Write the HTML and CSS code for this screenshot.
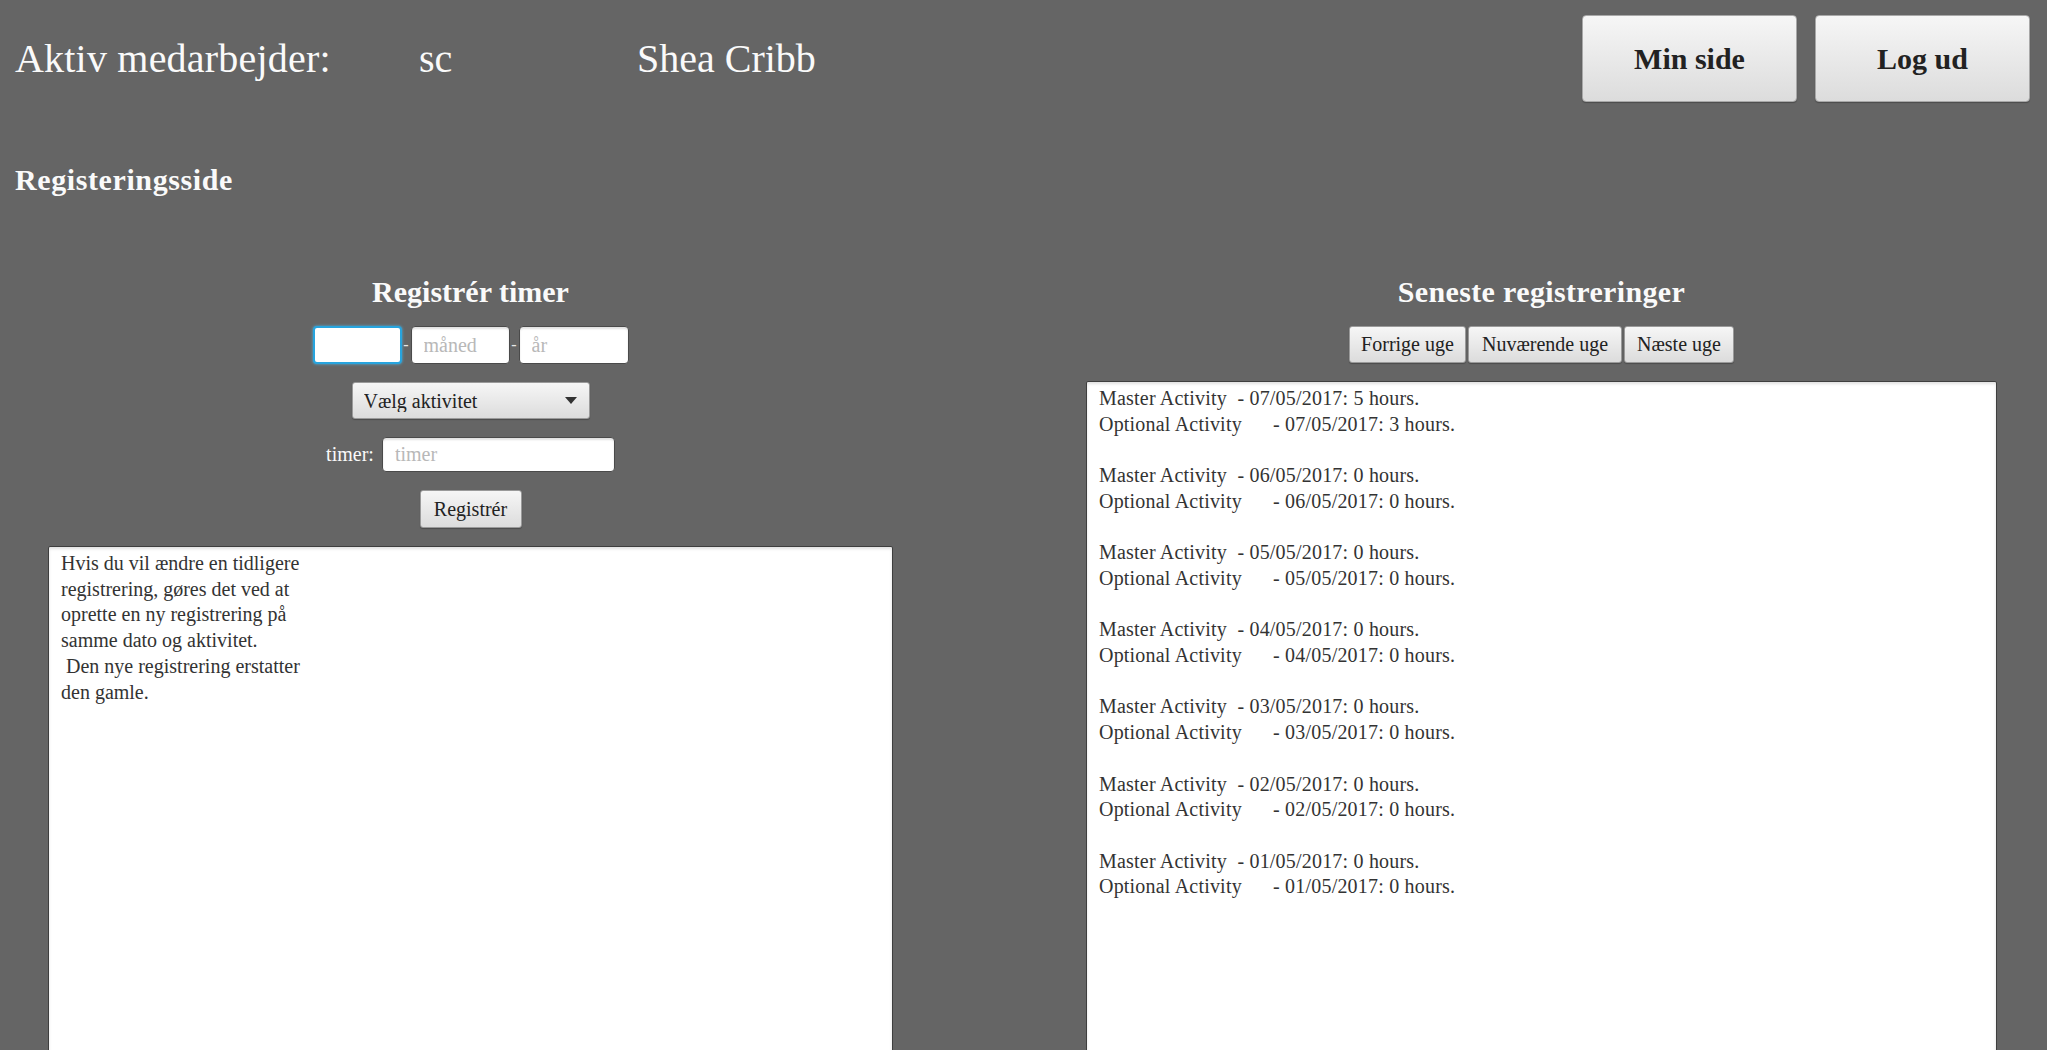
FILE: index.html
```html
<!DOCTYPE html>
<html lang="da">
<head>
<meta charset="utf-8">
<title>Registeringsside</title>
<link rel="stylesheet" href="styles.css">
</head>
<body>
<div class="page">
  <header class="topbar">
    <div class="user">
      <span class="user-label">Aktiv medarbejder:</span>
      <span class="user-initials">sc</span>
      <span class="user-name">Shea Cribb</span>
    </div>
    <div class="actions">
      <button class="big-btn">Min side</button>
      <button class="big-btn">Log ud</button>
    </div>
  </header>

  <h2 class="page-title">Registeringsside</h2>

  <main class="columns">
    <section class="col col-left">
      <h3 class="col-title">Registrér timer</h3>
      <div class="date-row">
        <input class="field field-day is-focus" type="text">
        <span class="dash">-</span>
        <input class="field field-month" type="text" placeholder="måned">
        <span class="dash">-</span>
        <input class="field field-year" type="text" placeholder="år">
      </div>
      <div class="select-wrap">
        <select class="select">
          <option>Vælg aktivitet</option>
        </select>
        <svg class="select-arrow" width="12" height="7" viewBox="0 0 12 7"><path d="M0 0h12L6 7z" fill="#333"/></svg>
      </div>
      <div class="timer-row">
        <label class="timer-label">timer:</label>
        <input class="field field-timer" type="text" placeholder="timer">
      </div>
      <button class="btn btn-register">Registrér</button>
      <div class="box box-info">Hvis du vil ændre en tidligere
registrering, gøres det ved at
oprette en ny registrering på
samme dato og aktivitet.
 Den nye registrering erstatter
den gamle.</div>
    </section>

    <section class="col col-right">
      <h3 class="col-title col-title-wide">Seneste registreringer</h3>
      <div class="week-row">
        <button class="btn btn-week btn-prev">Forrige uge</button>
        <button class="btn btn-week btn-cur">Nuværende uge</button>
        <button class="btn btn-week btn-next">Næste uge</button>
      </div>
      <div class="box box-list">Master Activity  - 07/05/2017: 5 hours.
Optional Activity      - 07/05/2017: 3 hours.

Master Activity  - 06/05/2017: 0 hours.
Optional Activity      - 06/05/2017: 0 hours.

Master Activity  - 05/05/2017: 0 hours.
Optional Activity      - 05/05/2017: 0 hours.

Master Activity  - 04/05/2017: 0 hours.
Optional Activity      - 04/05/2017: 0 hours.

Master Activity  - 03/05/2017: 0 hours.
Optional Activity      - 03/05/2017: 0 hours.

Master Activity  - 02/05/2017: 0 hours.
Optional Activity      - 02/05/2017: 0 hours.

Master Activity  - 01/05/2017: 0 hours.
Optional Activity      - 01/05/2017: 0 hours.</div>
    </section>
  </main>
</div>
</body>
</html>
```

FILE: styles.css
```css
html, body {
  margin: 0;
  padding: 0;
  background: #656565;
}

body {
  font-family: "Liberation Serif", "Times New Roman", serif;
  color: #ffffff;
}

.page {
  height: 1050px;
  overflow: hidden;
}

/* ---------- top bar ---------- */
.topbar {
  display: flex;
  justify-content: space-between;
  align-items: center;
  padding: 15px 17px 0 15px;
}

.user {
  display: flex;
  align-items: baseline;
  font-size: 40px;
  line-height: 46px;
  color: #fafafa;
}

.user-label {
  width: 404px;
  letter-spacing: 0.2px;
}

.user-initials {
  width: 218px;
}

.actions {
  display: flex;
  gap: 18px;
}

.big-btn {
  width: 215px;
  height: 87px;
  font-family: inherit;
  font-size: 30px;
  font-weight: bold;
  color: #222;
  background: linear-gradient(#f6f6f6, #dcdcdc);
  border: 1px solid #a8a8a8;
  border-radius: 4px;
  box-shadow: 0 1px 1px rgba(0, 0, 0, 0.25);
  padding: 0;
}

/* ---------- page title ---------- */
.page-title {
  margin: 60px 0 0 15px;
  font-size: 30px;
  line-height: 36px;
  font-weight: bold;
  letter-spacing: 0.6px;
  color: #fafafa;
}

/* ---------- columns ---------- */
.columns {
  display: grid;
  grid-template-columns: 941px 911px;
  column-gap: 145px;
  margin-top: 76px;
}

.col {
  display: flex;
  flex-direction: column;
  align-items: center;
  gap: 18px;
}

.col-title {
  margin: 0 0 -2px 0;
  font-size: 30px;
  line-height: 36px;
  font-weight: bold;
  color: #fafafa;
}

.col-title-wide {
  letter-spacing: 0.35px;
}

/* ---------- form fields ---------- */
.date-row {
  display: flex;
  align-items: center;
}

.dash {
  width: 9px;
  text-align: center;
  font-size: 16px;
  color: #e8e8e8;
}

.field {
  box-sizing: border-box;
  height: 38px;
  padding: 0 0 0 12px;
  font-family: inherit;
  font-size: 20px;
  color: #333;
  background: #ffffff;
  border: 1px solid #4a4a4a;
  border-radius: 4px;
  box-shadow: inset 0 2px 2px rgba(0, 0, 0, 0.12);
  outline: none;
}

.field::placeholder {
  color: #b8b8b8;
}

.field.is-focus {
  border: 2px solid #27a4de;
  box-shadow: 0 0 3px #49b6e8;
  padding-left: 11px;
}

.field-day { width: 89px; }
.field-month { width: 99px; }
.field-year { width: 110px; }

.select-wrap {
  position: relative;
  width: 238px;
  height: 37px;
}

.select {
  appearance: none;
  -webkit-appearance: none;
  box-sizing: border-box;
  width: 238px;
  height: 37px;
  padding: 0 0 0 11px;
  font-family: inherit;
  font-size: 20px;
  color: #222;
  background: linear-gradient(#f6f6f6, #dcdcdc);
  border: 1px solid #9a9a9a;
  border-radius: 3px;
  box-shadow: 0 1px 1px rgba(0, 0, 0, 0.25);
}

.select-arrow {
  position: absolute;
  right: 13px;
  top: 15px;
  pointer-events: none;
}

.timer-row {
  display: flex;
  align-items: center;
  gap: 8px;
}

.timer-label {
  font-size: 20px;
  color: #fafafa;
}

.field-timer {
  width: 233px;
  height: 35px;
}

/* ---------- buttons ---------- */
.btn {
  box-sizing: border-box;
  height: 38px;
  font-family: inherit;
  font-size: 20px;
  color: #222;
  background: linear-gradient(#f6f6f6, #dcdcdc);
  border: 1px solid #9a9a9a;
  border-radius: 3px;
  box-shadow: 0 1px 1px rgba(0, 0, 0, 0.25);
  padding: 0;
}

.btn-register {
  width: 102px;
}

.week-row {
  display: flex;
  gap: 2px;
}

.btn-week {
  height: 37px;
}

.btn-prev { width: 117px; }
.btn-cur { width: 154px; }
.btn-next { width: 110px; }

/* ---------- boxes ---------- */
.box {
  box-sizing: border-box;
  background: #ffffff;
  border: 1px solid #3e3e3e;
  border-radius: 2px;
  box-shadow: inset 0 2px 3px rgba(0, 0, 0, 0.12);
  color: #333;
  font-size: 20px;
  line-height: 25.7px;
  white-space: pre;
  padding: 4px 12px 0 12px;
  height: 760px;
}

.box-info {
  width: 845px;
  align-self: center;
}

.box-list {
  width: 911px;
  letter-spacing: 0.2px;
}
```
